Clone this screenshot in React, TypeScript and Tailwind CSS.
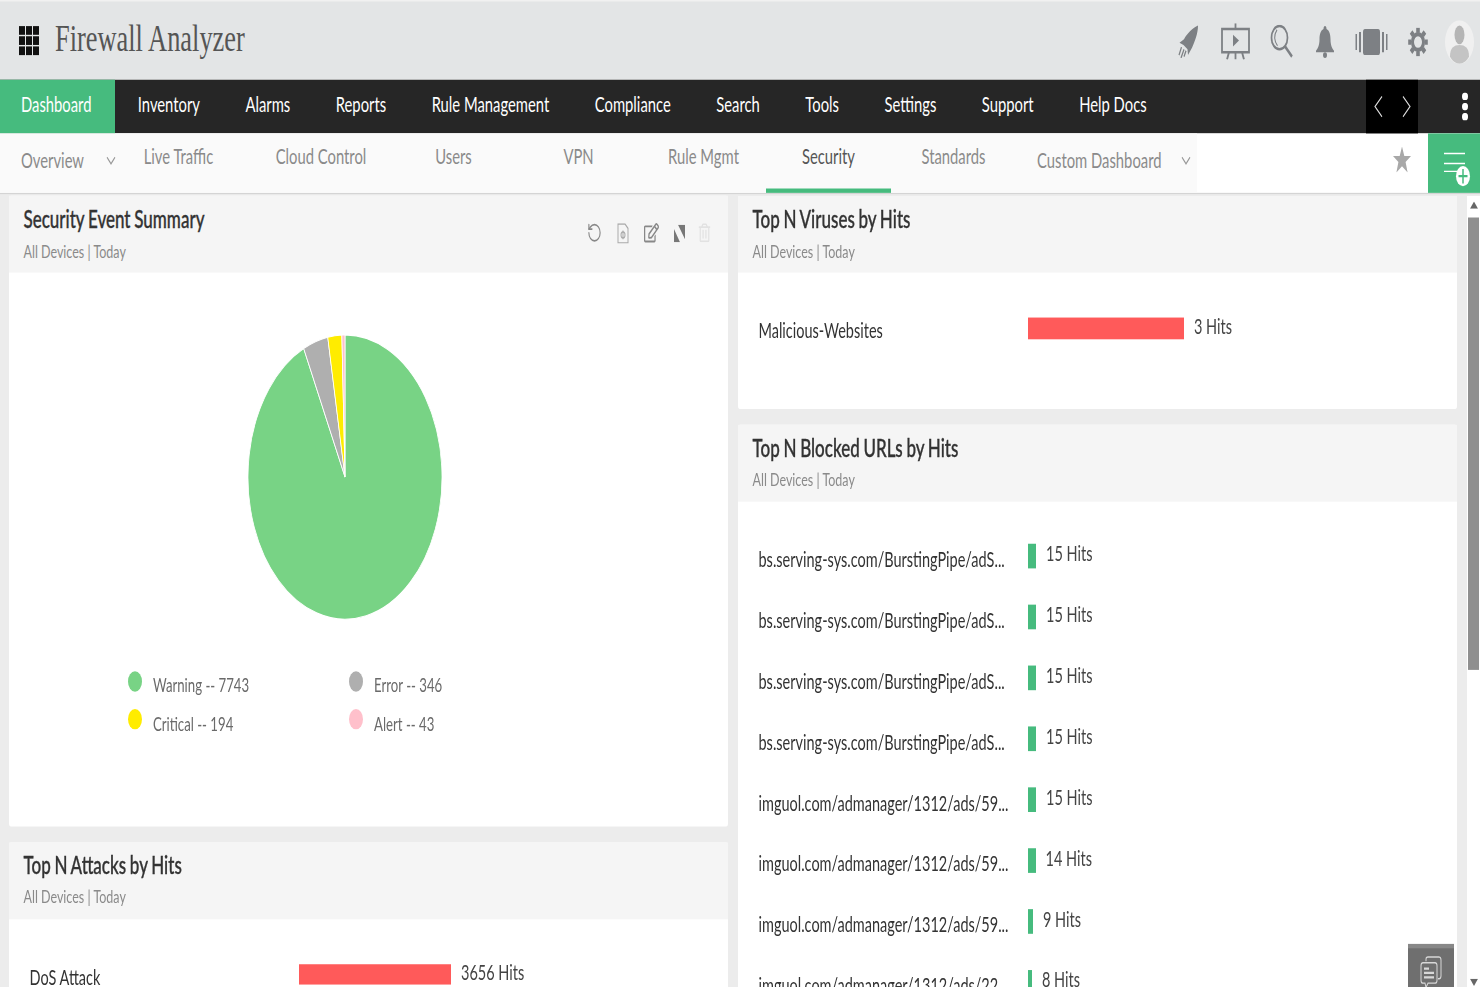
import React from "react";
import { FaRegEdit, FaRegTrashAlt } from "react-icons/fa";
import { RotateCcw } from "lucide-react";

const navItems = ["Inventory", "Alarms", "Reports", "Rule Management", "Compliance", "Search", "Tools", "Settings", "Support", "Help Docs"];

const subTabs = [
  { label: "Live Traffic", cls: "w-[97px] mr-[24px]" },
  { label: "Cloud Control", cls: "w-[140px]" },
  { label: "Users", cls: "w-[125px]" },
  { label: "VPN", cls: "w-[125px]" },
  { label: "Rule Mgmt", cls: "w-[125px]" },
  { label: "Security", cls: "w-[125px]", active: true },
  { label: "Standards", cls: "w-[125px]" },
];

const urls = [
  { label: "bs.serving-sys.com/BurstingPipe/adS...", bar: "w-[8px]", hits: "15 Hits" },
  { label: "bs.serving-sys.com/BurstingPipe/adS...", bar: "w-[8px]", hits: "15 Hits" },
  { label: "bs.serving-sys.com/BurstingPipe/adS...", bar: "w-[8px]", hits: "15 Hits" },
  { label: "bs.serving-sys.com/BurstingPipe/adS...", bar: "w-[8px]", hits: "15 Hits" },
  { label: "imguol.com/admanager/1312/ads/59...", bar: "w-[8px]", hits: "15 Hits" },
  { label: "imguol.com/admanager/1312/ads/59...", bar: "w-[7.5px]", hits: "14 Hits" },
  { label: "imguol.com/admanager/1312/ads/59...", bar: "w-[5px]", hits: "9 Hits" },
  { label: "imguol.com/admanager/1312/ads/22...", bar: "w-[4px]", hits: "8 Hits" },
];

const slices = [
  { value: 7743, color: "#78d385" },
  { value: 346, color: "#afafaf" },
  { value: 194, color: "#ffec00" },
  { value: 43, color: "#ffc0cb" },
];

function Pie() {
  const total = slices.reduce((s, x) => s + x.value, 0);
  let angle = 0;
  return (
    <svg width="196" height="198" viewBox="-98 -99 196 198">
      {slices.map((s) => {
        const start = angle;
        angle += (s.value / total) * Math.PI * 2;
        const large = angle - start > Math.PI ? 1 : 0;
        const d = `M0 0 L${97 * Math.sin(start)} ${-98 * Math.cos(start)} A97 98 0 ${large} 1 ${97 * Math.sin(angle)} ${-98 * Math.cos(angle)} Z`;
        return <path key={s.color} d={d} fill={s.color} stroke="#fff" strokeWidth="0.8" />;
      })}
    </svg>
  );
}

function Gear() {
  return (
    <svg width="20" height="20" viewBox="-10 -10 20 20" fill="none" stroke="currentColor">
      <circle r="5.5" strokeWidth="3" />
      {[0, 45, 90, 135].map((a) => (
        <path key={a} d="M0 -9.800V-6.500M0 6.500V9.800" strokeWidth="3.600" transform={`rotate(${a})`} />
      ))}
    </svg>
  );
}

function CardHead({ title, sub = "All Devices | Today", children }: { title: string; sub?: string; children?: React.ReactNode }) {
  return (
    <div className="flex h-[53px] items-start justify-between bg-[#f5f5f5] pl-[14.5px] pr-[16px]">
      <div>
        <div className="pt-[6px] text-[17px] leading-[20px] font-medium text-[#333] [word-spacing:-0.6px] [-webkit-text-stroke:0.25px_#333]">{title}</div>
        <div className="pt-[4.5px] text-[12.5px] leading-[16px] text-[#8a8a8a]">{sub}</div>
      </div>
      {children}
    </div>
  );
}

function HitRow({ label, bar, hits, barCls, labelCls = "pt-[4px]", hitsCls = "pb-[4.5px]" }: { label: string; bar: string; hits: string; barCls: string; labelCls?: string; hitsCls?: string }) {
  return (
    <div className="flex h-[42px] items-center pl-[20.5px]">
      <div className={`w-[269.5px] text-[14.5px] text-[#333] ${labelCls}`}>{label}</div>
      <div className={`${bar} ${barCls}`} />
      <div className={`pl-[10px] text-[14.5px] text-[#444] ${hitsCls}`}>{hits}</div>
    </div>
  );
}

function Legend({ color, label }: { color: string; label: string }) {
  return (
    <div className="flex h-[26.2px] w-[221px] items-center">
      <span className={`mb-[5px] h-[14px] w-[14px] rounded-full ${color}`} />
      <span className="pl-[11px] pt-[2px] text-[13.2px] text-[#6a6a6a]">{label}</span>
    </div>
  );
}

export default function App() {
  return (
    <div className="h-[987px] w-[1480px] overflow-hidden bg-[#ececec]">
      {/* picture is stretched vertically, so everything below is laid out at 1/1.45 height */}
      <div className="relative h-[681px] w-[1480px] origin-top-left scale-y-[1.45] overflow-hidden [font-family:Lato,sans-serif]">
        <header className="flex h-[54.5px] items-center border-t border-[#f1f1f1] bg-[#e3e5e6] pl-[19px] pr-[6px]">
          <div className="grid w-[20px] grid-cols-3 gap-[1.5px]">
            {Array.from({ length: 9 }).map((_, i) => (
              <span key={i} className="h-[5.5px] bg-[#111]" />
            ))}
          </div>
          <div className="pb-[1px] pl-[16px] text-[26.4px] text-[#555] [font-family:'Liberation_Serif',serif]">Firewall Analyzer</div>
          <div className="ml-auto flex items-center gap-5 pt-[2px] text-[#7d8084]">
            <svg width="22" height="23" viewBox="0 0 22 23" fill="currentColor">
              <path d="M20 0.500C15 2 9 6 6 10L1.500 12.500L5.500 14L9.500 17L10 21L14 16C17 11 20 6 20 0.500Z" />
              <path d="M3.500 15.500L1 21M6 17L3 23M8 18L6 22" stroke="currentColor" strokeWidth="1.200" />
            </svg>
            <svg className="ml-px" width="29" height="25" viewBox="0 0 29 25" fill="none" stroke="currentColor" strokeWidth="1.8">
              <path d="M1 4H28V20H1ZM14.500 0V4M14.500 20V25M8 20L6 25M21 20L23 25" />
              <path d="M12 8L18 12L12 16Z" fill="currentColor" stroke="none" />
            </svg>
            <svg width="23" height="23" viewBox="0 0 23 23" fill="none" stroke="currentColor" strokeWidth="1.7">
              <circle cx="9.500" cy="9" r="8" />
              <path d="M15 15L22 22" strokeWidth="2.200" />
              <path d="M7 3.500C4 7 4 11 7.500 14.500" strokeWidth="1" />
            </svg>
            <svg className="ml-[3px]" width="18" height="22" viewBox="0 0 18 22" fill="currentColor">
              <path d="M9 0C10 0 10.500 1 10.500 2C13.500 3 14.500 6 14.500 9C14.500 13 16 15 18 17V18H0V17C2 15 3.500 13 3.500 9C3.500 6 4.500 3 7.500 2C7.500 1 8 0 9 0Z" />
              <circle cx="9" cy="20" r="2" />
            </svg>
            <svg className="ml-px" width="33" height="18" viewBox="0 0 33 18" fill="currentColor">
              <rect x="8" y="0" width="17" height="18" rx="2" />
              <path d="M0.500 3.500H2V14.500H0.500ZM4 2H6V16H4ZM27 2H29V16H27ZM31 3.500H32.500V14.500H31Z" />
            </svg>
            <Gear />
            <svg className="-ml-[3px]" width="29" height="30" viewBox="0 0 29 30">
              <ellipse cx="14.500" cy="15" rx="14.500" ry="15" fill="#f0f0f0" />
              <ellipse cx="14.500" cy="10" rx="5" ry="6.500" fill="#b5b5b5" />
              <path d="M5 25C5 19 9 17 14.500 17C20 17 24 19 24 25C22 28 18 30 14.500 30C11 30 7 28 5 25Z" fill="#c4c4c4" />
            </svg>
          </div>
        </header>

        <nav className="flex h-[37.2px] items-center bg-[#262626] text-[14.8px] text-white">
          <div className="flex h-full w-[115px] shrink-0 items-center bg-[#46bb7e] pb-[4px] pl-[21px]">Dashboard</div>
          {navItems.map((n) => (
            <div key={n} className="shrink-0 px-[22.75px] pb-[4px]">{n}</div>
          ))}
          <div className="ml-auto flex h-full w-[52px] items-center justify-center gap-[19px] bg-black">
            <svg width="9" height="15" viewBox="0 0 9 15" fill="none" stroke="#ddd" strokeWidth="1">
              <path d="M8 0.500L1 7.500L8 14.500" />
            </svg>
            <svg width="9" height="15" viewBox="0 0 9 15" fill="none" stroke="#ddd" strokeWidth="1">
              <path d="M1 0.500L8 7.500L1 14.500" />
            </svg>
          </div>
          <div className="flex w-[62px] flex-col items-center gap-[2px] pl-[32px]">
            <span className="h-[5px] w-[6px] rounded-full bg-white" />
            <span className="h-[5px] w-[6px] rounded-full bg-white" />
            <span className="h-[5px] w-[6px] rounded-full bg-white" />
          </div>
        </nav>

        <div className="flex h-[42.800px] border-b-[1.4px] border-[#d4d4d4] bg-white text-[14.8px] text-[#8a8a8a]">
          <div className="flex w-[1197px] shrink-0 bg-[#fafafa]">
            <div className="flex w-[130px] shrink-0 items-center pb-[5.5px] pl-[21px]">
              Overview
              <svg className="ml-[22px] mt-[3px]" width="10" height="6" viewBox="0 0 10 6" fill="none" stroke="#999" strokeWidth="1">
                <path d="M1 0.500L5 5L9 0.500" />
              </svg>
            </div>
            {subTabs.map((t) => (
              <div
                key={t.label}
                className={`flex h-full shrink-0 items-center justify-center ${t.cls} ${t.active ? "border-b-[3px] border-[#46bb7e] pb-[7.5px] text-[#555]" : "pb-[10.5px]"}`}
              >
                {t.label}
              </div>
            ))}
            <div className="flex shrink-0 items-center whitespace-nowrap pb-[5.5px] pl-[21px]">
              Custom Dashboard
              <svg className="ml-[19px] mt-[3px]" width="10" height="6" viewBox="0 0 10 6" fill="none" stroke="#999" strokeWidth="1">
                <path d="M1 0.500L5 5L9 0.500" />
              </svg>
            </div>
          </div>
          <div className="flex w-[231px] justify-end pr-[17px] pt-[9px]">
            <svg width="18" height="18" viewBox="0 0 18 18" fill="#a8a8a8">
              <path d="M9 0L11.300 6.600H18L12.600 10.800L14.600 18L9 13.700L3.400 18L5.400 10.800L0 6.600H6.700Z" />
            </svg>
          </div>
          <div className="w-[52px] bg-[#46bb7e]">
            <svg width="52" height="41" viewBox="0 0 52 41">
              <path d="M16 13.800H37M16 20.700H37M16 26.200H30" stroke="#fff" strokeWidth="1" />
              <circle cx="35" cy="29.500" r="7" fill="#fff" />
              <path d="M35 24.500V34.500M30.500 29.500H39.500" stroke="#46bb7e" strokeWidth="1.500" />
            </svg>
          </div>
        </div>

        <main className="flex items-start pl-[9px] pt-[1px]">
          <div className="flex w-[719px] flex-col gap-[11px]">
            <section className="h-[434.500px] rounded-[2px] bg-white">
              <CardHead title="Security Event Summary">
                <div className="flex items-center gap-[15px] pt-[18px] pr-[1.5px] text-[#888]">
                  <RotateCcw size={15} strokeWidth={1.8} />
                  <svg width="12" height="14" viewBox="0 0 12 14" fill="none" stroke="#aaa" strokeWidth="1">
                    <path d="M1 0.500H8L11 3.500V13.500H1Z" />
                    <circle cx="6" cy="8" r="2" />
                    <path d="M6 5V11" />
                  </svg>
                  <FaRegEdit size={15} />
                  <svg width="11" height="12" viewBox="0 0 11 12" fill="#777">
                    <path d="M0 3L6 12H0ZM4 0H11V10Z" />
                  </svg>
                  <FaRegTrashAlt className="-ml-[2px]" size={13} color="#e2e2e2" />
                </div>
              </CardHead>
              <div className="flex pl-[237.500px] pt-[41.3px]">
                <Pie />
              </div>
              <div className="flex flex-wrap pl-[119px] pt-[31.4px]">
                <Legend color="bg-[#78d385]" label="Warning -- 7743" />
                <Legend color="bg-[#afafaf]" label="Error -- 346" />
                <Legend color="bg-[#ffec00]" label="Critical -- 194" />
                <Legend color="bg-[#ffc0cb]" label="Alert -- 43" />
              </div>
            </section>
            <section className="h-[200px] rounded-[2px] bg-white">
              <CardHead title="Top N Attacks by Hits" />
              <div className="pt-[17px]">
                <HitRow label="DoS Attack" bar="w-[152px]" hits="3656 Hits" hitsCls="pb-[3px]" barCls="h-[14px] bg-[#ff5a5a]" />
              </div>
            </section>
          </div>

          <div className="ml-[10px] flex w-[719px] flex-col gap-[11px]">
            <section className="h-[146.200px] rounded-[2px] bg-white">
              <CardHead title="Top N Viruses by Hits" />
              <div className="pt-[17px]">
                <HitRow label="Malicious-Websites" bar="w-[156px]" hits="3 Hits" labelCls="pt-[2px]" hitsCls="pb-[2.5px]" barCls="h-[14.500px] bg-[#ff5a5a]" />
              </div>
            </section>
            <section className="h-[400px] rounded-[2px] bg-white">
              <CardHead title="Top N Blocked URLs by Hits" />
              <div className="pt-[17px]">
                {urls.map((u, i) => (
                  <HitRow key={i} label={u.label} bar={u.bar} hits={u.hits} barCls="h-[16.500px] bg-[#46bb7e]" />
                ))}
              </div>
            </section>
          </div>

          <div className="ml-[10px] flex h-[547px] w-[13px] flex-col items-center bg-white">
            <svg className="mt-[4px]" width="8" height="5" viewBox="0 0 8 5" fill="#666">
              <path d="M4 0L8 5H0Z" />
            </svg>
            <div className="mt-[6px] h-[311.5px] w-[11px] bg-[#8f8f8f]" />
            <svg className="mt-auto mb-[2px]" width="8" height="5" viewBox="0 0 8 5" fill="#666">
              <path d="M0 0H8L4 5Z" />
            </svg>
          </div>
        </main>

        {/* chat button sits over the content */}
        <div className="absolute bottom-0 left-[1408px] flex h-[30px] w-[46px] items-end justify-center border-t-[3px] border-[#888] bg-[#6f6f6f]">
          <svg width="22" height="22" viewBox="0 0 22 22" fill="none" stroke="#d8d8d8" strokeWidth="1">
            <path d="M6 4V2.500Q6 1 8 1H19Q21 1 21 3V14Q21 16 19 16H18" />
            <path d="M3 5H15Q17 5 17 7V17Q17 19 15 19H8L6 22L5 19H3Q1 19 1 17V7Q1 5 3 5Z" />
            <path d="M4 9H9M4 12H14M4 15H14" strokeWidth="1.500" />
          </svg>
        </div>
      </div>
    </div>
  );
}
